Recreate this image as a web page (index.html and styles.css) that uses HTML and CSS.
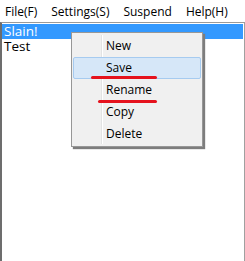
FILE: index.html
```html
<!DOCTYPE html>
<html lang="en">
<head>
    <meta charset="UTF-8">
    <title>Notes</title>
    <link rel="stylesheet" href="styles.css">
</head>
<body>
    <ul class="menubar">
        <li>File(F)</li>
        <li>Settings(S)</li>
        <li>Suspend</li>
        <li>Help(H)</li>
    </ul>
    <ul class="notelist">
        <li class="selected">Slain!</li>
        <li>Test</li>
    </ul>
    <ul class="ctxmenu">
        <li>New</li>
        <li class="hover">Save</li>
        <li>Rename</li>
        <li>Copy</li>
        <li>Delete</li>
    </ul>
    <div class="mark mark-save"></div>
    <div class="mark mark-rename"></div>
</body>
</html>
```
FILE: styles.css
```css
body{margin:0; height:261px; background:#fff; font-family:"Open Sans","Noto Sans",sans-serif; overflow:hidden; position:relative;}
ul{margin:0; padding:0; list-style:none;}
.menubar{display:flex; height:22px; align-items:center; padding-left:5px; font-size:12px; color:#000; background:#fff;}
.menubar li{margin-right:14px;}
.notelist{height:238px; border:1px solid #a0a0a0; border-left:2px solid #6d6d6d; border-top-color:#9a9a9a; font-size:13.5px; padding-top:1px;}
.notelist li{height:15px; line-height:15px; padding-left:2px;}
.notelist .selected{background:#3399ff; color:#fff; margin-right:1px;}
.ctxmenu{position:absolute; left:71px; top:32px; width:130px; height:111px; padding:2px 0 0 0; background:#f0f0f0; border:1px solid #979797; box-shadow:2px 2px 1px #7d7d7d; font-size:12px;}
.ctxmenu::before{content:""; position:absolute; left:29px; top:2px; bottom:2px; width:1px; background:#e2e3e3; border-right:1px solid #fff;}
.ctxmenu li{height:22px; line-height:22px; padding-left:33px; margin:0 1px; position:relative;}
.ctxmenu .hover{background:#d6e7f8; border:1px solid #a6cbf0; height:20px; line-height:20px; padding-left:32px; border-radius:2px;}
.mark{position:absolute; height:3px; background:#e5121d; border-radius:2px;}
.mark-save{left:91px; top:76px; width:66px;}
.mark-rename{left:98px; top:100px; width:59px;}
```
